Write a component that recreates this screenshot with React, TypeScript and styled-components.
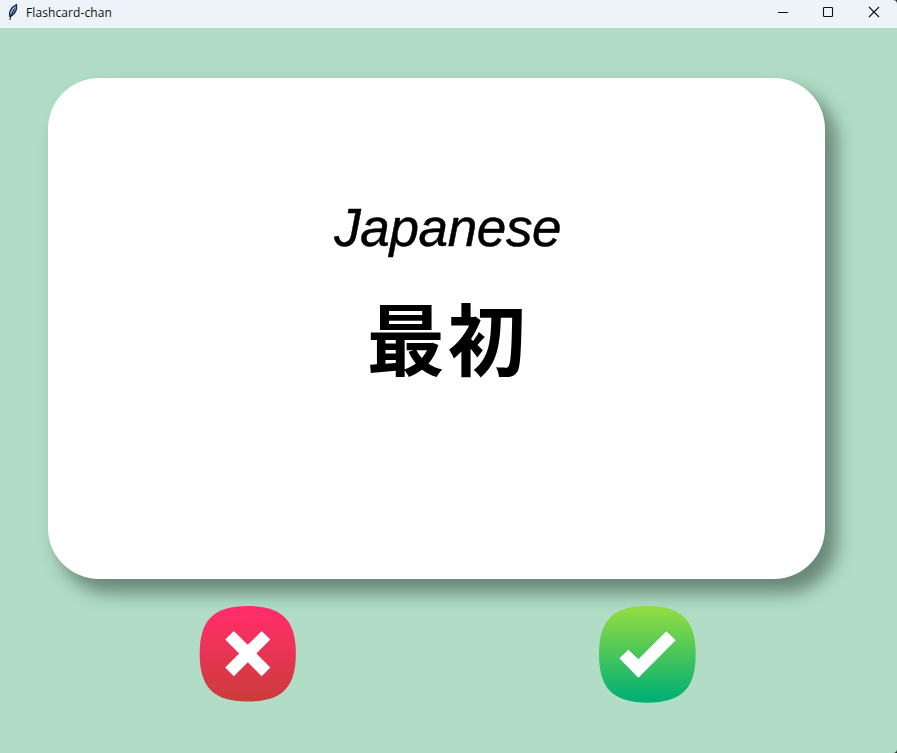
import React from "react";
import styled, { createGlobalStyle } from "styled-components";

const GlobalStyle = createGlobalStyle`
  * { box-sizing: border-box; }
  html, body { margin: 0; padding: 0; }
  body { background: #b1ddc6; overflow: hidden; }
`;

const Window = styled.div`
  display: flex;
  flex-direction: column;
  width: 897px;
  height: 753px;
  overflow: hidden;
  background: #262a28;
`;

const TitleBar = styled.header`
  display: flex;
  align-items: center;
  flex: 0 0 28px;
  height: 28px;
  padding: 0 0 4px 7px;
  background: #ecf4f9;
  border-top-right-radius: 4px;
`;

const Title = styled.span`
  flex: 1;
  margin-left: 5px;
  padding-top: 1px;
  font: 12px/16px "Open Sans", sans-serif;
  letter-spacing: 0.1px;
  color: #111;
`;

const WindowButton = styled.button`
  display: flex;
  align-items: center;
  justify-content: center;
  width: 46px;
  height: 24px;
  padding: 0;
  border: 0;
  background: transparent;
`;

const Content = styled.main`
  display: flex;
  flex: 1;
  flex-direction: column;
  padding: 50px 71.5px 0 48px;
  background: #b1ddc6;
  border-bottom-right-radius: 4px;
`;

const Card = styled.section`
  display: flex;
  flex-direction: column;
  align-items: center;
  width: 777.4px;
  height: 501px;
  padding-top: 120px;
  padding-left: 22px;
  border-radius: 51px;
  background: #fff;
  box-shadow: 11px 13px 18px 1px rgba(20, 32, 26, 0.46);
`;

const Language = styled.h1`
  margin: 0;
  font: italic 400 53px/60px "Liberation Sans", sans-serif;
  letter-spacing: -0.35px;
  -webkit-text-stroke: 0.5px #000;
  color: #000;
`;

const Word = styled.p`
  margin: 28px 0 0;
  font: 700 78px/100px "Noto Sans CJK JP", sans-serif;
  letter-spacing: 3px;
  color: #000;
`;

const Answers = styled.div`
  display: flex;
  align-items: flex-start;
  justify-content: space-between;
  width: 497px;
  margin: 27px 0 0 151px;
`;

const AnswerButton = styled.button`
  display: block;
  padding: 0;
  border: 0;
  background: transparent;
  line-height: 0;
`;

const squircle =
  "M145 0C248 0 290 42 290 145S248 290 145 290S0 248 0 145S42 0 145 0Z";

function Feather() {
  return (
    <svg width="14" height="18" viewBox="0 0 14 18">
      <path d="M2.7 13.5C1.3 9.5 3.9 4.3 9.5 1.5C10.3 5.2 9 10.5 4.3 13Z" fill="#6287bd" stroke="#172234" strokeWidth="1.1" />
      <path d="M7.2 6.5C5.2 9 3.8 11.8 2.9 17" fill="none" stroke="#111" strokeWidth="1" />
      <path d="M3.9 10.5C4.5 8 5.8 5.8 7.6 4.1" fill="none" stroke="#b8d1ee" strokeWidth="1" />
    </svg>
  );
}

export default function App() {
  return (
    <>
      <GlobalStyle />
      <Window>
        <TitleBar>
          <Feather />
          <Title>Flashcard-chan</Title>
          <WindowButton aria-label="Minimize">
            <svg width="12" height="12" viewBox="0 0 12 12"><path d="M2 6.5H12" stroke="#111" /></svg>
          </WindowButton>
          <WindowButton aria-label="Maximize">
            <svg width="12" height="12" viewBox="0 0 12 12"><rect x="1.5" y="1.5" width="9" height="9" rx=".7" fill="none" stroke="#111" strokeWidth="1.1" /></svg>
          </WindowButton>
          <WindowButton aria-label="Close">
            <svg width="12" height="12" viewBox="0 0 12 12"><path d="M1 1L11 11M11 1L1 11" stroke="#111" strokeWidth="1.1" /></svg>
          </WindowButton>
        </TitleBar>
        <Content>
          <Card>
            <Language>Japanese</Language>
            <Word lang="ja">最初</Word>
          </Card>
          <Answers>
            <AnswerButton aria-label="Unknown">
              <svg width="98" height="97" viewBox="-2 0 294 291">
                <defs>
                  <linearGradient id="red" x1="0" y1="0" x2="0" y2="1">
                    <stop offset="0.1" stopColor="#ff2e68" />
                    <stop offset="1" stopColor="#cb3c3a" />
                  </linearGradient>
                </defs>
                <g transform="scale(0.995 0.988)">
                  <path d={squircle} fill="url(#red)" />
                  <path d="M77 102L103 76L145 118L187 76L213 102L171 144L213 187L187 213L145 171L103 213L77 187L119 144Z" fill="#fff" />
                </g>
              </svg>
            </AnswerButton>
            <AnswerButton aria-label="Known">
              <svg width="98" height="97" viewBox="-3 0 294 291">
                <defs>
                  <linearGradient id="green" x1="0" y1="0" x2="0" y2="1">
                    <stop offset="0.05" stopColor="#8edb43" />
                    <stop offset="0.95" stopColor="#03b073" />
                  </linearGradient>
                </defs>
                <path d={squircle} fill="url(#green)" />
                <path d="M202 76L230 103L118 215L61 157L88 131L118 160Z" fill="#fff" />
              </svg>
            </AnswerButton>
          </Answers>
        </Content>
      </Window>
    </>
  );
}
